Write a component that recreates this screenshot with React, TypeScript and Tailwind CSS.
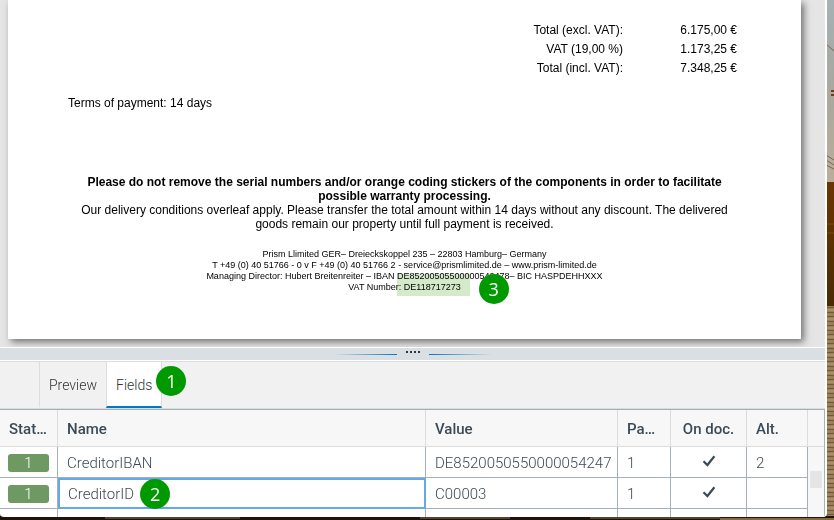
import React, { useState } from 'react';

const totals = [
  { label: 'Total (excl. VAT):', amount: '6.175,00 €' },
  { label: 'VAT (19,00 %)', amount: '1.173,25 €' },
  { label: 'Total (incl. VAT):', amount: '7.348,25 €' },
];

const fields = [
  { status: '1', name: 'CreditorIBAN', value: 'DE8520050550000054247', page: '1', onDoc: true, alt: '2' },
  { status: '1', name: 'CreditorID', value: 'C00003', page: '1', onDoc: true, alt: '' },
];

function Marker({ n, className }: { n: number; className: string }) {
  return (
    <span
      className={`absolute z-10 flex h-[30px] w-[30px] items-center justify-center rounded-full bg-[#009900] font-['Open_Sans',sans-serif] text-[18px] font-normal leading-none text-white ${className}`}
    >
      {n}
    </span>
  );
}

function Check() {
  return (
    <svg viewBox="0 0 14 12" className="mx-auto mb-0.5 block h-3 w-3.5" fill="none" stroke="#3b4a57" strokeWidth="2.2">
      <path d="M1.5 6.2 5.4 10 12.4 1.2" />
    </svg>
  );
}

// Desktop wallpaper that shows at the right and bottom edges of the window
function Wallpaper() {
  return (
    <svg className="absolute inset-0 h-full w-full" viewBox="0 0 834 520" preserveAspectRatio="none">
      <defs>
        <linearGradient id="sky" x1="0" y1="0" x2="0" y2="1">
          <stop offset="0" stopColor="#a5b1b4" />
          <stop offset="0.5" stopColor="#a8a89f" />
          <stop offset="1" stopColor="#b9ae98" />
        </linearGradient>
        <linearGradient id="wood" x1="0" y1="0" x2="0" y2="1">
          <stop offset="0" stopColor="#6b3503" />
          <stop offset="0.45" stopColor="#5c3300" />
          <stop offset="1" stopColor="#4a2a06" />
        </linearGradient>
        <pattern id="grain" width="20" height="9" patternUnits="userSpaceOnUse">
          <rect width="20" height="9" fill="#9a8159" />
          <path d="M0 2 20 1M0 6 20 7" stroke="#6d5636" strokeWidth="1.2" />
          <path d="M0 4 20 4" stroke="#b49b70" />
        </pattern>
      </defs>
      <rect width="834" height="182" fill="url(#sky)" />
      <path d="M826 44 834 51M826 155 834 160M826 160 834 165M826 165 834 169" stroke="#7d634a" fill="none" />
      <path d="M831 91H834M831 95H834" stroke="#6a3d20" strokeWidth="2" />
      <rect y="182" width="834" height="125" fill="url(#wood)" />
      <path d="M826 224H834M826 233H834" stroke="#874600" strokeWidth="1" />
      <rect y="306" width="834" height="214" fill="url(#grain)" />
      <rect y="516" width="834" height="4" fill="#1d150c" />
      <path d="M105 518H240M420 518H510M590 518H720" stroke="#54442c" strokeWidth="2" />
      <path d="M720 519H834" stroke="#866b3c" strokeWidth="2" />
    </svg>
  );
}

function InvoicePage() {
  return (
    <article className="relative h-[339px] bg-white px-[60px] pt-[21px] font-['Liberation_Sans',Arial,sans-serif] text-[12px] leading-[14px] text-black shadow-[3px_3px_7px_0_rgba(0,0,0,0.5)]">
      <table className="ml-auto mr-1 text-right leading-[19px]">
        <tbody>
          {totals.map((row) => (
            <tr key={row.label}>
              <td>{row.label}</td>
              <td className="w-[114px]">{row.amount}</td>
            </tr>
          ))}
        </tbody>
      </table>
      <p className="mt-[18px]">Terms of payment: 14 days</p>
      <div className="mt-[65px] text-center">
        <p className="px-3 font-bold">
          Please do not remove the serial numbers and/or orange coding stickers of the components in order to facilitate
          possible warranty processing.
        </p>
        <p>
          Our delivery conditions overleaf apply. Please transfer the total amount within 14 days without any discount. The
          delivered goods remain our property until full payment is received.
        </p>
      </div>
      <footer className="mt-[18px] text-center text-[9px] leading-[11px]">
        <p>Prism Llimited GER– Dreieckskoppel 235 – 22803 Hamburg– Germany</p>
        <p>T +49 (0) 40 51766 - 0 v F +49 (0) 40 51766 2 - service@prismlimited.de – www.prism-limited.de</p>
        <p>Managing Director: Hubert Breitenreiter – IBAN DE85200505500000542478– BIC HASPDEHHXXX</p>
        <p>
          VAT Number:{' '}
          <span className="relative">
            DE118717273
            <mark className="absolute -bottom-1 -left-[7px] -right-[9px] -top-2 bg-[#d4eac8] mix-blend-multiply" />
            <Marker n={3} className="-right-12 -top-2" />
          </span>
        </p>
      </footer>
    </article>
  );
}

function Splitter() {
  return (
    <div className="flex h-[14px] shrink-0 justify-center gap-2 border-y border-white bg-[#d9dfe2]">
      <span className="mt-[6px] h-px w-[63px] bg-gradient-to-l from-[#0079c1] to-transparent" />
      <span className="mt-[3px] flex w-4 justify-center gap-0.5">
        <i className="h-0.5 w-0.5 bg-[#333]" />
        <i className="h-0.5 w-0.5 bg-[#333]" />
        <i className="h-0.5 w-0.5 bg-[#333]" />
        <i className="h-0.5 w-0.5 bg-[#333]" />
      </span>
      <span className="mt-[6px] h-px w-[63px] bg-gradient-to-r from-[#0079c1] to-transparent" />
    </div>
  );
}

export default function App() {
  const [tab, setTab] = useState('Fields');
  const [selected, setSelected] = useState('CreditorID');

  return (
    <div className="relative h-screen overflow-hidden pb-[3px] pr-[7px] font-['Roboto',sans-serif]">
      <Wallpaper />
      <div className="relative flex h-full flex-col overflow-hidden rounded-b border-r-2 border-white bg-white">
        <section className="shrink-0 overflow-hidden bg-[#e5e5e5] pb-2 pl-2 pr-6">
          <InvoicePage />
        </section>

        <Splitter />

        <nav className="flex h-12 shrink-0 border-y border-[#dcdcdc] bg-[#f1f1f1] pl-[39px]">
          {['Preview', 'Fields'].map((name) => (
            <div key={name} className="relative flex">
              <button
                onClick={() => setTab(name)}
                className={`border-b-2 border-l border-l-[#dcdcdc] px-[9px] pt-0.5 text-[14px] font-light text-[#333] ${
                  tab === name ? 'border-r border-b-[#0079c1] border-r-[#dcdcdc] bg-white' : 'border-b-transparent'
                }`}
              >
                {name}
              </button>
              {name === 'Fields' && <Marker n={1} className="-right-6 top-1" />}
            </div>
          ))}
        </nav>

        <section className="flex min-h-0 flex-1 overflow-hidden border-r border-t border-[#a5b1b8]">
          <table className="w-full table-fixed self-start border-separate border-spacing-0 text-left text-[15px] text-[#3b4a57]">
            <colgroup>
              <col className="w-[58px]" />
              <col />
              <col className="w-[192px]" />
              <col className="w-[53px]" />
              <col className="w-[76px]" />
              <col className="w-[61px]" />
            </colgroup>
            <thead>
              <tr className="h-[37px] bg-[#f7f7f7]">
                {['Stat…', 'Name', 'Value', 'Pa…', 'On doc.', 'Alt.'].map((h) => (
                  <th
                    key={h}
                    className={`whitespace-nowrap border-b border-r border-[#dcdcdc] pt-0.5 font-medium ${
                      h === 'On doc.' ? 'text-center' : 'pl-[9px]'
                    }`}
                  >
                    {h}
                  </th>
                ))}
              </tr>
            </thead>
            <tbody className="font-light [&_td]:border-b [&_td]:border-r [&_td]:border-[#a5b1b8]">
              {fields.map((f) => (
                <tr key={f.name} className="h-[31px]" onClick={() => setSelected(f.name)}>
                  <td className="px-2 pt-px">
                    <span className="block h-[18px] rounded-[3px] bg-[#6f9963] text-center leading-[18px] text-white">
                      {f.status}
                    </span>
                  </td>
                  <td
                    className={`relative pt-0.5 ${
                      selected === f.name ? 'pl-2.5 outline-2 -outline-offset-2 outline-[#64a8e8]' : 'pl-[9px]'
                    }`}
                  >
                    <span className="relative inline-block">
                      {f.name}
                      {f.name === 'CreditorID' && <Marker n={2} className="-right-9 -top-1" />}
                    </span>
                  </td>
                  <td className="whitespace-nowrap pl-[9px] pt-0.5">{f.value}</td>
                  <td className="pl-[9px] pt-0.5">{f.page}</td>
                  <td>{f.onDoc && <Check />}</td>
                  <td className="pl-[9px] pt-0.5">{f.alt}</td>
                </tr>
              ))}
              <tr className="h-[31px]">
                <td />
                <td />
                <td />
                <td />
                <td />
                <td />
              </tr>
            </tbody>
          </table>
          <div className="w-4 shrink-0 bg-[#f7f7f7]">
            <div className="h-[37px] border-b border-[#dcdcdc]" />
            <div className="mx-auto mt-6 h-[17px] w-3 bg-[#e5e5e5]" />
          </div>
        </section>
      </div>
    </div>
  );
}
